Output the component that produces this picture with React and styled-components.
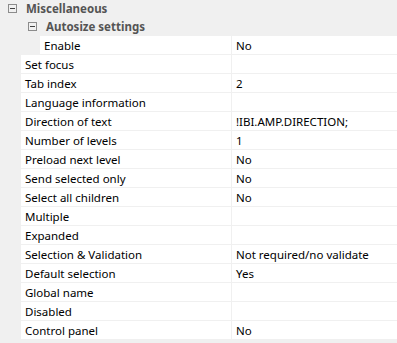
import React from "react";
import styled, { createGlobalStyle } from "styled-components";

const Global = createGlobalStyle`
  html, body { margin: 0; padding: 0; background: #f0f0f0; }
  body { font-family: "Noto Sans", "Open Sans", sans-serif; }
`;

const Grid = styled.div`
  width: 397px;
  height: 343px;
  background: #f0f0f0;
  display: flex;
  flex-direction: column;
  overflow: hidden;
  font-size: 11.5px;
`;

const Category = styled.div`
  display: flex;
  align-items: center;
  height: ${(p) => p.$h}px;
  padding-left: ${(p) => p.$indent}px;
  gap: 9px;
  color: #545454;
  font-weight: bold;
  font-size: 11.5px;
  flex: none;
`;

const Toggle = styled.span`
  width: 9px;
  height: 9px;
  box-sizing: border-box;
  border: 1px solid #8c8c8c;
  position: relative;
  flex: none;
  &::after {
    content: "";
    position: absolute;
    left: 1px;
    right: 1px;
    top: 3px;
    height: 1px;
    background: #404040;
  }
`;

const Row = styled.div`
  display: flex;
  height: 18px;
  margin-left: ${(p) => p.$indent}px;
  margin-bottom: 1px;
  background: #fff;
  flex: none;
  color: #000;
`;

const Label = styled.div`
  width: ${(p) => 231 - p.$indent}px;
  box-sizing: border-box;
  padding-left: 4px;
  display: flex;
  align-items: center;
  white-space: nowrap;
`;

const Value = styled.div`
  flex: 1;
  border-left: 1px solid #f0f0f0;
  padding-left: 4px;
  display: flex;
  align-items: center;
  white-space: nowrap;
`;

const props = [
  ["Set focus", ""],
  ["Tab index", "2"],
  ["Language information", ""],
  ["Direction of text", "!IBI.AMP.DIRECTION;"],
  ["Number of levels", "1"],
  ["Preload next level", "No"],
  ["Send selected only", "No"],
  ["Select all children", "No"],
  ["Multiple", ""],
  ["Expanded", ""],
  ["Selection & Validation", "Not required/no validate"],
  ["Default selection", "Yes"],
  ["Global name", ""],
  ["Disabled", ""],
  ["Control panel", "No"],
];

export default function App() {
  return (
    <>
      <Global />
      <Grid>
        <Category $h={17} $indent={8}>
          <Toggle />
          Miscellaneous
        </Category>
        <Category $h={19} $indent={28}>
          <Toggle />
          Autosize settings
        </Category>
        <Row $indent={40}>
          <Label $indent={40}>Enable</Label>
          <Value>No</Value>
        </Row>
        {props.map(([k, v]) => (
          <Row key={k} $indent={21}>
            <Label $indent={21}>{k}</Label>
            <Value>{v}</Value>
          </Row>
        ))}
      </Grid>
    </>
  );
}
